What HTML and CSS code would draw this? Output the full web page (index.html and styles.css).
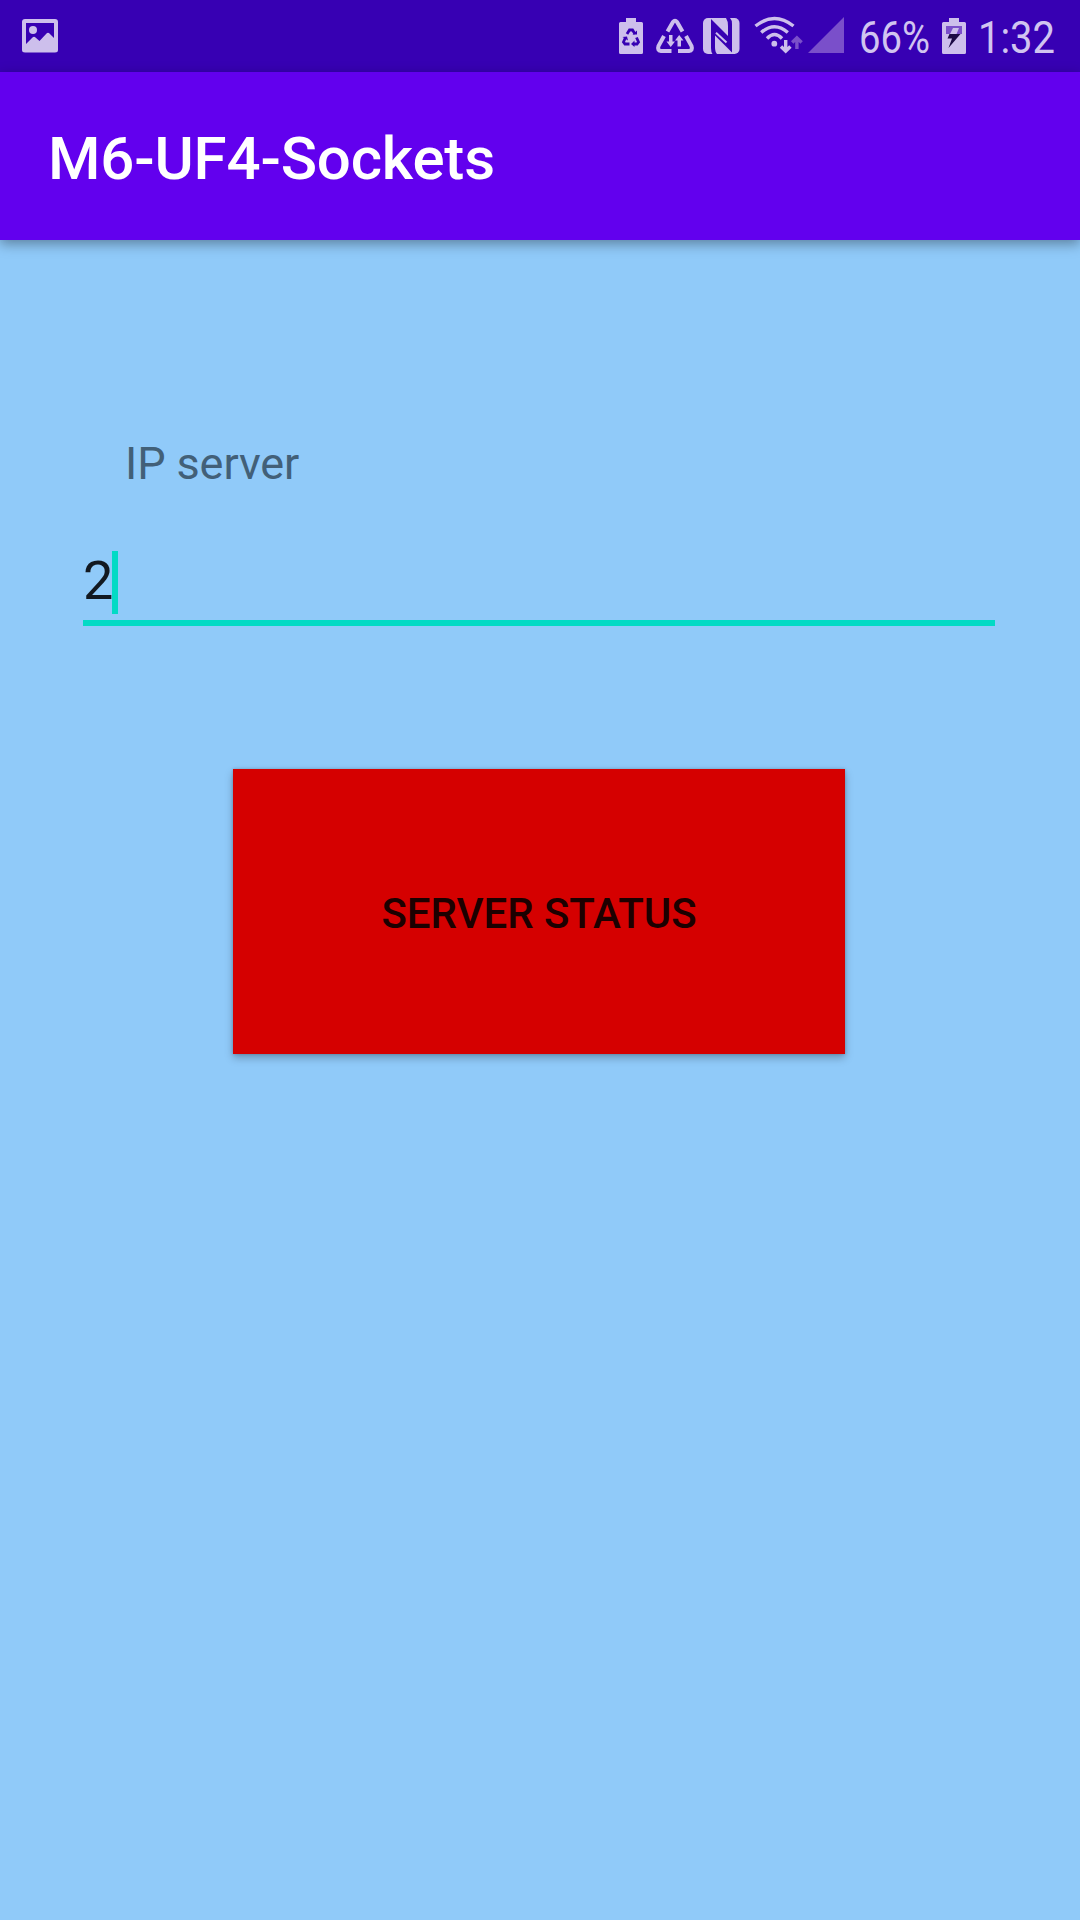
FILE: index.html
```html
<!DOCTYPE html>
<html lang="en">
<head>
<meta charset="utf-8">
<title>M6-UF4-Sockets</title>
<link rel="stylesheet" href="styles.css">
</head>
<body>
<div class="status-bar">
  <svg class="icon-photo" width="36" height="36" viewBox="0 0 36 36">
    <path fill-rule="evenodd" d="M3 1H33Q36 1 36 4V32Q36 34.500 33 34.500H3Q0 34.500 0 32V4Q0 1 3 1ZM4 5V26L10.500 19.500Q12 18 13.500 19.500L17.500 23L24.500 15.500Q26 14 27.500 15.500L32 20V5Z"/>
    <circle cx="11" cy="12" r="4"/>
  </svg>
  <div class="status-icons">
    <svg class="icon-saver" width="24" height="36" viewBox="0 0 24 36">
      <path d="M7 0H17V4H22.500Q24 4 24 5.500V34.500Q24 36 22.500 36H1.500Q0 36 0 34.500V5.500Q0 4 1.500 4H7Z"/>
      <g class="cutout">
        <path d="M8 16L10.500 12H13.500L16 16"/>
        <path d="M6.500 19.500L4.500 24L6 26H10.500"/>
        <path d="M17.500 19.500L19.500 24L18 26H14"/>
        <path class="cutout-fill" d="M13.500 16.500H18V12.500ZM3.500 19L8 18.500L9 22.500ZM15.500 22.500V29L12 26Z"/>
      </g>
    </svg>
    <svg class="icon-recycle" width="38" height="36" viewBox="0 0 38 36">
      <g class="stroke recycle">
        <path d="M11.500 13.500L17 4Q19 1.500 21 4L26.500 13.500"/>
        <path d="M8 18L2.500 28Q1 32.500 5 33H15.500"/>
        <path d="M30 18L35.500 28Q37 32.500 33 33H22"/>
      </g>
      <path d="M13 17H16.500V23.500H19L14.700 29L10.500 23.500H13ZM21.500 28.500H25V22.500H27.500L23.200 17L19 22.500H21.500Z"/>
    </svg>
    <svg class="icon-nfc" width="37" height="36" viewBox="0 0 37 36">
      <rect width="36.500" height="36" rx="5"/>
      <path class="nfc-gap" d="M8 1L25 18V8Q25 3 23 0H27Q29 2 29 6V34.500L12 17.500V29Q12 34 14 36H9.500Q8 34 8 30Z"/>
      <path class="nfc-slit" d="M13 14.800L23.500 24.500"/>
    </svg>
    <svg class="icon-wifi" width="49" height="37" viewBox="0 0 49 37">
      <g class="stroke">
        <path d="M1.500 9Q20.500 -6 39.500 9"/>
        <path d="M7.200 15.500Q20.500 4 33.800 15.500"/>
        <path d="M13 21.500Q20.500 13.500 28 21.500"/>
      </g>
      <circle cx="20.300" cy="26.700" r="2.900"/>
      <path class="stroke" d="M31.700 23V34M27 29.500L31.700 34.200L36.400 29.500"/>
      <path class="stroke dim" d="M42.900 32V21M38.200 25.500L42.900 20.800L47.600 25.500"/>
    </svg>
    <svg class="icon-signal" width="36" height="36" viewBox="0 0 36 36"><path d="M36 0V36H0Z"/></svg>
    <svg class="percent" width="72" height="44" viewBox="0 0 72 44"><text x="0" y="39" textLength="71" lengthAdjust="spacingAndGlyphs">66%</text></svg>
    <svg class="icon-battery" width="24" height="36" viewBox="0 0 24 36">
      <path d="M7 0H17V4H22.500Q24 4 24 5.500V34.500Q24 36 22.500 36H1.500Q0 36 0 34.500V5.500Q0 4 1.500 4H7Z"/>
      <path class="level" d="M4 8H20V16H4Z"/>
      <path d="M11 10H17L14.500 16H8Z"/>
      <path class="bolt" d="M7.500 16H18.500L6.500 30L10 20.500H5.500Z"/>
    </svg>
    <svg class="time" width="78" height="44" viewBox="0 0 78 44"><text x="0" y="39" textLength="77" lengthAdjust="spacingAndGlyphs">1:32</text></svg>
  </div>
</div>
<header class="app-bar"><h1 class="title">M6-UF4-Sockets</h1></header>
<main class="content">
  <div class="label">IP server</div>
  <div class="field"><span class="value">2</span><span class="cursor"></span></div>
  <button class="status-button" type="button">SERVER STATUS</button>
</main>
</body>
</html>
```
FILE: styles.css
```css
* { box-sizing: border-box; }

body {
  margin: 0;
  height: 1920px;
  display: flex;
  flex-direction: column;
  overflow: hidden;
  background: #90caf9;
  font-family: Roboto, sans-serif;
}

.status-bar {
  flex: none;
  height: 72px;
  padding: 0 24px 0 22px;
  display: flex;
  align-items: center;
  justify-content: space-between;
  background: #3700b3;
  fill: #cdbfec;
}

.status-icons { display: flex; align-items: center; }
.status-bar svg { display: block; flex: none; overflow: visible; }
.status-bar text { font-size: 45px; fill: #d1c4f0; }

.icon-recycle { margin-left: 13px; }
.icon-nfc { margin-left: 9px; }
.icon-wifi { margin: -2px 0 0 14px; }
.icon-signal { margin: -2px 0 0 5px; fill: #7a4fca; }
.percent { margin: -1px 11px 0 15px; }
.time { margin: -1px 0 0 12px; }

.stroke { fill: none; stroke: #cdbfec; stroke-width: 3.4; }
.recycle { stroke-width: 4; }
.dim { stroke: #7a4fca; }
.cutout { fill: none; stroke: #3700b3; stroke-width: 2.8; }
.cutout-fill { fill: #3700b3; stroke: none; }
.nfc-gap { fill: #3700b3; }
.nfc-slit { fill: none; stroke: #cdbfec; stroke-width: 2; }
.level { fill: #7a4fca; }
.bolt { fill: #1c0b45; }

.app-bar {
  flex: none;
  height: 168px;
  padding: 0 48px;
  display: flex;
  align-items: center;
  background: #6200ee;
  box-shadow: 0 4px 12px rgba(0, 0, 0, .36);
}

.title {
  margin: 0;
  padding-top: 6px;
  font-size: 60px;
  line-height: 70px;
  font-weight: 500;
  letter-spacing: -.16px;
  color: #fff;
}

.content {
  flex: 1;
  display: flex;
  flex-direction: column;
  padding: 197px 85px 0 83px;
}

.label {
  margin-left: 42px;
  font-size: 45px;
  line-height: 53px;
  letter-spacing: -.1px;
  color: #426078;
}

.field {
  height: 85px;
  margin-top: 51px;
  padding-top: 10px;
  display: flex;
  border-bottom: 6px solid #03dac5;
}

.value {
  width: 29px;
  font-size: 54px;
  line-height: 59px;
  color: #121921;
}

.cursor { width: 6px; height: 63px; background: #03dac5; }

.status-button {
  align-self: center;
  width: 612px;
  height: 285px;
  margin-top: 143px;
  padding: 4px 0 0;
  border: 0;
  background: #d50000;
  box-shadow: 0 4px 8px rgba(0, 0, 0, .26), 0 0 3px rgba(0, 0, 0, .2);
  font: 500 42px/50px Roboto, sans-serif;
  letter-spacing: -.05px;
  color: #1c0000;
}
```
